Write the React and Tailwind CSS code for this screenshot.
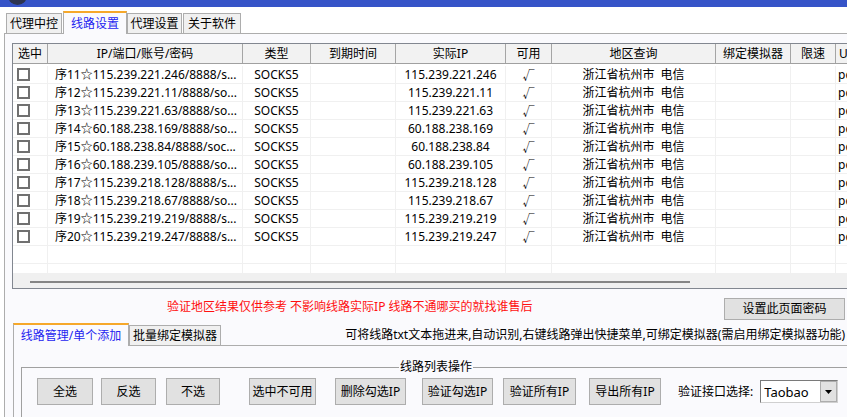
import React from "react";

const cols = [
  { w: "w-[35px]", h: "选中" },
  { w: "w-[195px]", h: "IP/端口/账号/密码" },
  { w: "w-[68px]", h: "类型" },
  { w: "w-[85px]", h: "到期时间" },
  { w: "w-[110px]", h: "实际IP" },
  { w: "w-[46px]", h: "可用" },
  { w: "w-[164px]", h: "地区查询" },
  { w: "w-[75px]", h: "绑定模拟器" },
  { w: "w-[45px]", h: "限速" },
  { w: "w-[90px]", h: "UA", left: true },
];

const rows = [
  ["序11☆115.239.221.246/8888/s...", "115.239.221.246"],
  ["序12☆115.239.221.11/8888/so...", "115.239.221.11"],
  ["序13☆115.239.221.63/8888/so...", "115.239.221.63"],
  ["序14☆60.188.238.169/8888/so...", "60.188.238.169"],
  ["序15☆60.188.238.84/8888/soc...", "60.188.238.84"],
  ["序16☆60.188.239.105/8888/so...", "60.188.239.105"],
  ["序17☆115.239.218.128/8888/s...", "115.239.218.128"],
  ["序18☆115.239.218.67/8888/so...", "115.239.218.67"],
  ["序19☆115.239.219.219/8888/s...", "115.239.219.219"],
  ["序20☆115.239.219.247/8888/s...", "115.239.219.247"],
];

function Tab({ children, w, selected, ml }) {
  if (selected) {
    return (
      <div
        className={`${w} ${ml} h-[23px] -mb-px relative z-10 flex items-center justify-center bg-[#fafafd] border-x border-[#adadad] border-t-2 border-t-[#f6a82a] text-[#2424f0] whitespace-nowrap`}
      >
        {children}
      </div>
    );
  }
  return (
    <div
      className={`${w} ${ml} h-[20px] flex items-center justify-center bg-[#f0f0f0] border border-b-0 border-[#adadad] whitespace-nowrap`}
    >
      {children}
    </div>
  );
}

function Btn({ children, w, ml }) {
  return (
    <div
      className={`${w} ${ml} h-[27px] shrink-0 flex items-center justify-center bg-[#e1e1e1] border border-[#adadad] whitespace-nowrap`}
    >
      {children}
    </div>
  );
}

export default function App() {
  return (
    <div className="w-[847px] h-[417px] overflow-hidden bg-white text-[12px] leading-[16px] text-black font-['Noto_Sans','Noto_Sans_CJK_SC',sans-serif]">
      {/* title bar strip */}
      <div className="h-[7px] bg-[#3654c8] overflow-hidden">
        <div className="ml-[8px] -mt-[14px] w-[19px] h-[19px] rounded-full bg-[#2d3450]"></div>
      </div>

      {/* main tabs */}
      <div className="h-[26px] flex items-end pl-[6px]">
        <Tab w="w-[56px]" ml="">代理中控</Tab>
        <Tab w="w-[64px]" ml="ml-px" selected>
          线路设置
        </Tab>
        <Tab w="w-[55px]" ml="">代理设置</Tab>
        <Tab w="w-[58px]" ml="ml-px">关于软件</Tab>
      </div>

      {/* tab panel */}
      <div className="ml-[4px] border-l border-t border-[#adadad] bg-[#fafafd] pl-[7px] pt-[9px] h-[500px]">
        {/* table */}
        <div className="w-[900px] h-[246px] border border-[#828790] bg-white flex flex-col">
          <div className="h-[20px] flex border-b border-[#a0a0a0] bg-[#f2f2f2] shrink-0">
            {cols.map((c, i) => (
              <div
                key={i}
                className={`${c.w} shrink-0 border-r border-[#a5a5a5] flex items-center whitespace-nowrap overflow-hidden ${
                  c.left ? "pl-[3px]" : "justify-center"
                }`}
              >
                {c.h}
              </div>
            ))}
          </div>
          <div className="flex-1 overflow-hidden pt-[2px]">
            {rows.map((r, i) => (
              <div key={i} className="h-[18px] flex border-b border-[#f0f0f0]">
                <div className={`${cols[0].w} shrink-0 border-r border-[#f0f0f0] flex items-center pl-[4px]`}>
                  <div className="w-[13px] h-[13px] border-2 border-[#707070] bg-white"></div>
                </div>
                <div className={`${cols[1].w} shrink-0 border-r border-[#f0f0f0] flex items-center pl-[7px] whitespace-nowrap overflow-hidden`}>
                  {r[0]}
                </div>
                <div className={`${cols[2].w} shrink-0 border-r border-[#f0f0f0] flex items-center justify-center`}>
                  SOCKS5
                </div>
                <div className={`${cols[3].w} shrink-0 border-r border-[#f0f0f0]`}></div>
                <div className={`${cols[4].w} shrink-0 border-r border-[#f0f0f0] flex items-center justify-center`}>
                  {r[1]}
                </div>
                <div className={`${cols[5].w} shrink-0 border-r border-[#f0f0f0] flex items-center justify-center font-['Noto_Sans_CJK_SC',sans-serif]`}>
                  √
                </div>
                <div className={`${cols[6].w} shrink-0 border-r border-[#f0f0f0] flex items-center justify-center whitespace-pre`}>
                  {"浙江省杭州市  电信"}
                </div>
                <div className={`${cols[7].w} shrink-0 border-r border-[#f0f0f0]`}></div>
                <div className={`${cols[8].w} shrink-0 border-r border-[#f0f0f0]`}></div>
                <div className={`${cols[9].w} shrink-0 flex items-center pl-[2px]`}>pc</div>
              </div>
            ))}
            {[0, 1, 2].map((k) => (
              <div key={k} className="h-[18px] flex border-b border-[#f0f0f0]">
                {cols.map((c, i) => (
                  <div key={i} className={`${c.w} shrink-0 ${i < 9 ? "border-r border-[#f0f0f0]" : ""}`}></div>
                ))}
              </div>
            ))}
          </div>
          <div className="h-[15px] shrink-0 bg-[#f0f0f0] pt-[8px] pl-[17px]">
            <div className="w-[660px] h-[2px] bg-[#858585]"></div>
          </div>
        </div>

        {/* red note + password button */}
        <div className="flex items-start mt-[9px]">
          <div className="ml-[155px] pt-[2px] leading-[14px] text-[#ff1010] whitespace-nowrap">
            验证地区结果仅供参考 不影响线路实际IP 线路不通哪买的就找谁售后
          </div>
          <div className="ml-auto mr-[2px] w-[121px] h-[22px] flex items-center justify-center bg-[#e1e1e1] border border-[#adadad]">
            设置此页面密码
          </div>
        </div>

        {/* sub tabs */}
        <div className="h-[25px] flex items-end">
          <div className="ml-px w-[116px] h-[23px] -mb-px relative z-10 flex items-center justify-center bg-[#fafafd] border-x border-[#adadad] border-t-2 border-t-[#f6a82a] text-[#2424f0] whitespace-nowrap">
            线路管理/单个添加
          </div>
          <div className="w-[92px] h-[20px] flex items-center justify-center bg-[#f0f0f0] border border-b-0 border-[#adadad] whitespace-nowrap">
            批量绑定模拟器
          </div>
          <div className="ml-auto mr-[2px] pb-[2px] whitespace-nowrap">
            可将线路txt文本拖进来,自动识别,右键线路弹出快捷菜单,可绑定模拟器(需启用绑定模拟器功能)
          </div>
        </div>

        {/* sub panel */}
        <div className="ml-px border-l border-t border-[#adadad] bg-[#fafafd] pl-[7px] pt-[13px] h-[200px]">
          <fieldset className="w-[900px] h-[70px] border border-[#a0a0a0]">
            <legend className="ml-[377px] px-[1px] leading-[16px]">线路列表操作</legend>
            <div className="flex items-center mt-[3px]">
              <Btn w="w-[56px]" ml="ml-[15px]">全选</Btn>
              <Btn w="w-[55px]" ml="ml-[8px]">反选</Btn>
              <Btn w="w-[54px]" ml="ml-[10px]">不选</Btn>
              <Btn w="w-[67px]" ml="ml-[29px]">选中不可用</Btn>
              <Btn w="w-[71px]" ml="ml-[19px]">删除勾选IP</Btn>
              <Btn w="w-[71px]" ml="ml-[16px]">验证勾选IP</Btn>
              <Btn w="w-[73px]" ml="ml-[10px]">验证所有IP</Btn>
              <Btn w="w-[72px]" ml="ml-[13px]">导出所有IP</Btn>
              <div className="ml-[17px] whitespace-nowrap">验证接口选择:</div>
              <div className="ml-[7px] w-[78px] h-[23px] flex items-stretch bg-white border border-[#7a7a7a] border-b-[#d0d0d0] border-r-[#d0d0d0]">
                <div className="flex-1 flex items-center pl-[3px] text-[13px]">Taobao</div>
                <div className="w-[17px] flex items-center justify-center bg-[#e1e1e1] border border-[#adadad]">
                  <svg width="7" height="4" viewBox="0 0 7 4">
                    <path d="M0 0 H7 L3.5 4 Z" fill="#000" />
                  </svg>
                </div>
              </div>
            </div>
          </fieldset>
        </div>
      </div>
    </div>
  );
}
